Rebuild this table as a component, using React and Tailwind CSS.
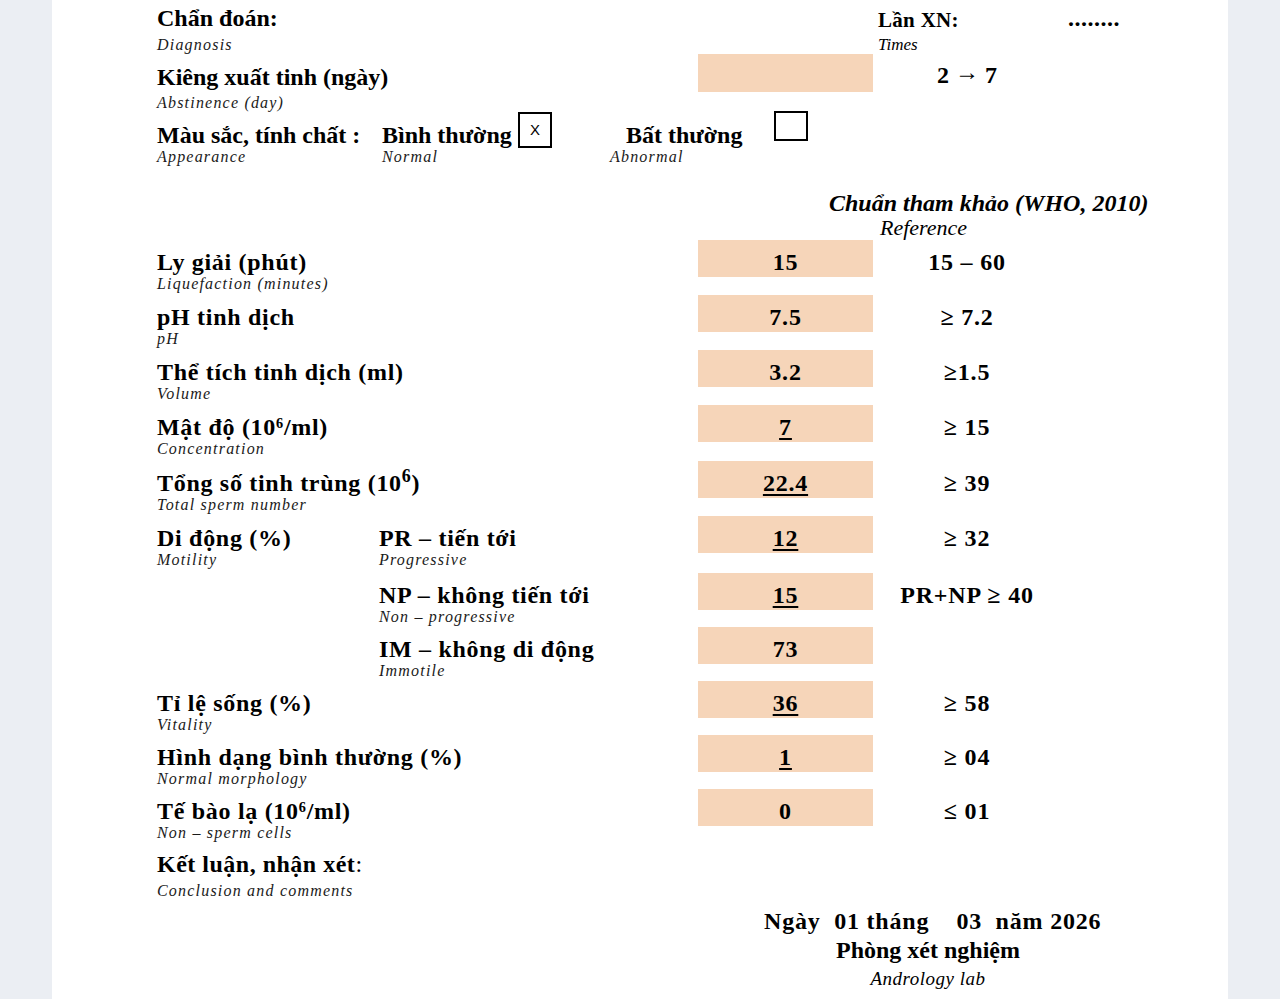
import React from 'react';

function Main({ children, className = '' }) {
  return <div className={`text-[24px] font-bold leading-[24px] whitespace-nowrap ${className}`}>{children}</div>;
}

function Sub({ children, className = '' }) {
  return (
    <div className={`text-[16px] italic leading-[20px] tracking-[1.2px] whitespace-nowrap text-[#1a1a1a] ${className}`}>
      {children}
    </div>
  );
}

function Label({ vi, en }) {
  return (
    <div className="pt-[10px]">
      <Main className="tracking-[0.7px]">{vi}</Main>
      <Sub>{en}</Sub>
    </div>
  );
}

function Row({ h, left, val, u, norm }) {
  return (
    <div className={`flex items-start ${h}`}>
      <div className="w-[541px] flex">{left}</div>
      <div className="w-[175px] h-[37px] bg-[#f6d5b9] text-center pt-[10px] text-[24px] font-bold leading-[24px] tracking-[0.8px]">
        <span className={u ? 'underline decoration-2 underline-offset-[3px]' : ''}>{val}</span>
      </div>
      <div className="w-[188px] text-center pt-[10px] text-[24px] font-bold leading-[24px] tracking-[0.8px] whitespace-pre">{norm}</div>
    </div>
  );
}

const rows = [
  { h: 'h-[55px]', vi: 'Ly giải (phút)', en: 'Liquefaction (minutes)', val: '15', norm: '15 – 60' },
  { h: 'h-[55px]', vi: 'pH tinh dịch', en: 'pH', val: '7.5', norm: '≥ 7.2' },
  { h: 'h-[55px]', vi: 'Thể tích tinh dịch (ml)', en: 'Volume', val: '3.2', norm: '≥1.5' },
  { h: 'h-[56px]', vi: 'Mật độ (10⁶/ml)', en: 'Concentration', val: '7', u: true, norm: '≥ 15' },
  { h: 'h-[55px]', vi: <>Tổng số tinh trùng (10<sup>6</sup>)</>, en: 'Total sperm number', val: '22.4', u: true, norm: '≥ 39' },
];

const motility = [
  { h: 'h-[57px]', vi: 'PR – tiến tới', en: 'Progressive', val: '12', u: true, norm: '≥ 32' },
  { h: 'h-[54px]', vi: 'NP – không tiến tới', en: 'Non – progressive', val: '15', u: true, norm: 'PR+NP ≥ 40' },
  { h: 'h-[54px]', vi: 'IM – không di động', en: 'Immotile', val: '73', norm: '' },
];

const rest = [
  { h: 'h-[54px]', vi: 'Tỉ lệ sống (%)', en: 'Vitality', val: '36', u: true, norm: '≥ 58' },
  { h: 'h-[54px]', vi: 'Hình dạng bình thường (%)', en: 'Normal morphology', val: '1', u: true, norm: '≥ 04' },
  { h: 'h-[53px]', vi: 'Tế bào lạ (10⁶/ml)', en: 'Non – sperm cells', val: '0', norm: '≤ 01' },
];

export default function App() {
  return (
    <div className="min-h-screen bg-[#ebeef3] font-['Liberation_Serif',serif] text-black">
      <div className="mx-auto w-[1176px] min-h-[999px] bg-white pl-[105px]">
        {/* chẩn đoán */}
        <div className="flex items-start h-[54px]">
          <div className="w-[721px] pt-[6px]">
            <Main>Chẩn đoán:</Main>
            <Sub className="mt-[5px]">Diagnosis</Sub>
          </div>
          <div className="w-[190px] pt-[8px]">
            <div className="text-[21px] font-bold leading-[24px] tracking-[0.3px]">Lần XN:</div>
            <div className="text-[17px] italic leading-[20px] mt-[3px]">Times</div>
          </div>
          <div className="pt-[6px] text-[24px] font-bold leading-[24px] tracking-[0.5px]">........</div>
        </div>

        {/* kiêng xuất tinh */}
        <div className="flex items-start h-[57px]">
          <div className="w-[541px] pt-[11px]">
            <Main>Kiêng xuất tinh (ngày)</Main>
            <Sub className="mt-[4px]">Abstinence (day)</Sub>
          </div>
          <div className="w-[175px] h-[38px] bg-[#f6d5b9]" />
          <div className="w-[188px] pt-[9px] text-center text-[24px] font-bold leading-[24px]">
            2 <span className="relative -top-[3px]">→</span> 7
          </div>
        </div>

        {/* màu sắc */}
        <div className="flex items-start h-[36px]">
          <div className="w-[225px] pt-[12px]"><Main>Màu sắc, tính chất :</Main></div>
          <div className="w-[136px] pt-[12px]"><Main>Bình thường</Main></div>
          <div className="mt-[1px] w-[34px] h-[36px] border-2 border-black flex items-center justify-center font-['Liberation_Sans',sans-serif] text-[15px]">X</div>
          <div className="ml-[74px] w-[148px] pt-[12px]"><Main>Bất thường</Main></div>
          <div className="w-[34px] h-[30px] border-2 border-black" />
        </div>
        <div className="flex h-[20px]">
          <Sub className="w-[225px]">Appearance</Sub>
          <Sub className="w-[228px]">Normal</Sub>
          <Sub>Abnormal</Sub>
        </div>

        {/* tiêu đề chuẩn */}
        <div className="h-[73px] pt-[24px]">
          <div className="pl-[672px] text-[24px] font-bold italic leading-[24px] whitespace-nowrap">
            Chuẩn tham khảo (WHO, 2010)
          </div>
          <div className="pl-[723px] mt-[2px] text-[22px] italic leading-[22px]">Reference</div>
        </div>

        {rows.map((r, i) => (
          <Row key={i} h={r.h} val={r.val} u={r.u} norm={r.norm} left={<Label vi={r.vi} en={r.en} />} />
        ))}

        {motility.map((r, i) => (
          <Row
            key={i}
            h={r.h}
            val={r.val}
            u={r.u}
            norm={r.norm}
            left={
              <>
                <div className="w-[222px]">
                  {i === 0 && <Label vi="Di động (%)" en="Motility" />}
                </div>
                <Label vi={r.vi} en={r.en} />
              </>
            }
          />
        ))}

        {rest.map((r, i) => (
          <Row key={i} h={r.h} val={r.val} u={r.u} norm={r.norm} left={<Label vi={r.vi} en={r.en} />} />
        ))}

        {/* kết luận */}
        <div className="pt-[10px]">
          <div className="text-[24px] leading-[24px] tracking-[0.5px] whitespace-nowrap">
            <span className="font-bold">Kết luận, nhận xét</span>:
          </div>
          <Sub className="mt-[5px]">Conclusion and comments</Sub>
        </div>

        {/* chữ ký */}
        <div className="ml-[593px] w-[356px] mt-[8px] pb-[6px]">
          <div className="pl-[14px] text-[24px] font-bold leading-[24px] tracking-[0.8px] whitespace-pre">Ngày  01 tháng    03  năm 2026</div>
          <div className="mt-[5px] text-center text-[24px] font-bold leading-[24px]">Phòng xét nghiệm</div>
          <div className="mt-[7px] text-center text-[19px] italic leading-[20px] tracking-[0.5px]">Andrology lab</div>
        </div>
      </div>
    </div>
  );
}
